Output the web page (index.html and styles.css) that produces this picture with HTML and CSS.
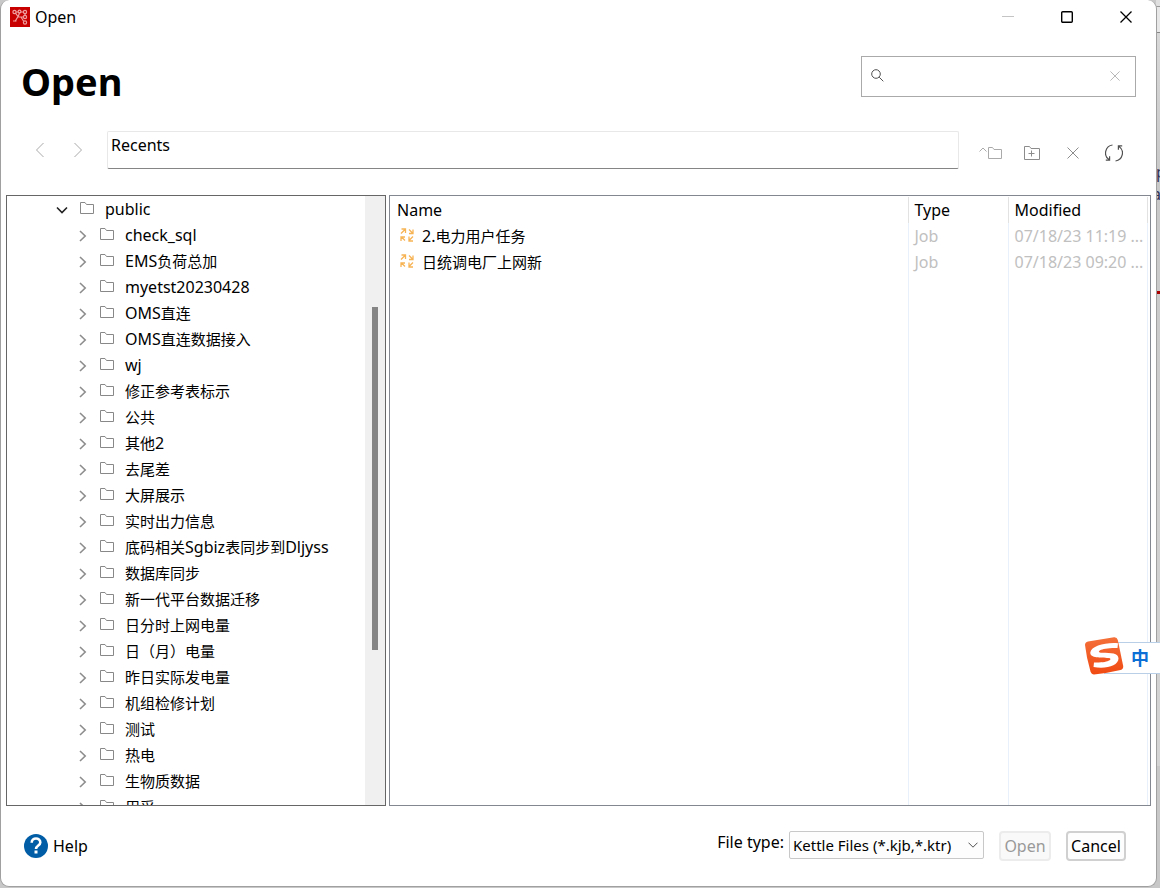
FILE: index.html
```html
<!DOCTYPE html>
<html lang="zh-CN">
<head>
<meta charset="utf-8">
<title>Open</title>
<link rel="stylesheet" href="styles.css">
</head>
<body>
<svg class="sprite" aria-hidden="true">
  <symbol id="folder" viewBox="0 0 14 12"><path d="M.5 11.500V.5H5L6.500 2.500H13.500V11.500Z"/></symbol>
  <symbol id="chev" viewBox="0 0 8 12"><path d="M1 1 6.200 6 1 11"/></symbol>
  <symbol id="cross" viewBox="0 0 12 12"><path d="M.5 .5 11.500 11.500M11.500 .5 .5 11.500"/></symbol>
  <symbol id="job" viewBox="0 0 14 14"><path d="M1 5.500 5 1.500M1.500 1H5.500V5M9 1.500 12.500 5M13 1.500V5.500H9M5 12.500 1.500 9M1 13V9H5M13 8.500 9 12.500M9 8.500V13H13"/></symbol>
</svg>
<div class="backdrop" aria-hidden="true"><span class="behind one">p</span><span class="behind two">a</span><span class="behind-line"></span></div>
<main class="window">
  <header class="titlebar">
    <svg class="app-icon" viewBox="0 0 20 20"><rect width="20" height="20" fill="#c80000"/><g fill="none" stroke="#f0a0a0" stroke-width="1.200"><circle cx="4.500" cy="5" r="1.600"/><circle cx="9.500" cy="4.500" r="1.400"/><circle cx="15" cy="5" r="1.600"/><circle cx="15" cy="10" r="1.600"/><circle cx="15" cy="15.500" r="1.600"/><path d="M6 5H8M11 5H13.500M15 6.500V8.500M5.500 6.200 8 9.500 5 14.500M3 14H6.500M9.500 6 8 10H13.500M11 10 13.500 14"/></g></svg>
    <span class="caption">Open</span>
    <button class="win-btn" aria-label="Minimize" disabled><svg class="faint" width="12" height="12" viewBox="0 0 12 12"><path d="M0 5.500H12"/></svg></button>
    <button class="win-btn" aria-label="Maximize"><svg width="12" height="12" viewBox="0 0 12 12"><rect x=".7" y=".7" width="10.600" height="10.600" rx="1" stroke-width="1.400"/></svg></button>
    <button class="win-btn" aria-label="Close"><svg width="12" height="12" stroke-width="1.300"><use href="#cross"/></svg></button>
  </header>
  <section class="heading">
    <h1>Open</h1>
    <div class="search">
      <svg class="dark" width="13" height="13" viewBox="0 0 13 13"><circle cx="5" cy="5" r="4.300"/><path d="M8.200 8.200 12.300 12.300"/></svg>
      <input type="text" aria-label="Search">
      <button aria-label="Clear search"><svg class="light" width="10" height="10"><use href="#cross"/></svg></button>
    </div>
  </section>
  <section class="toolbar">
    <button class="nav" aria-label="Back"><svg class="light" width="10" height="16" viewBox="0 0 10 16"><path d="M8.500 1 1.500 8 8.500 15"/></svg></button>
    <button class="nav" aria-label="Forward"><svg class="light" width="10" height="16" viewBox="0 0 10 16"><path d="M1.500 1 8.500 8 1.500 15"/></svg></button>
    <input class="path" type="text" aria-label="Location" value="Recents">
    <div class="tools">
      <button aria-label="Up one folder"><svg class="light" width="23" height="12" viewBox="0 0 23 12"><path d="M.5 4.500 4 1 7.500 4.500M9.500 11.500V.5H13.500L15 2.500H22.500V11.500Z"/></svg></button>
      <button aria-label="New folder"><svg class="mid" width="16" height="14" viewBox="0 0 16 14"><path d="M.5 13.500V.5H5.500L7 2.500H15.500V13.500ZM7.500 4.500V10.500M4.500 7.500H10.500"/></svg></button>
      <button aria-label="Delete"><svg class="mid" width="12" height="12"><use href="#cross"/></svg></button>
      <button aria-label="Refresh"><svg class="dark" width="18" height="18" viewBox="0 0 18 18" stroke-width="1.200"><path d="M7.500 1A8 8 0 0 0 4 15.500M.8 16.200H4.600V12.300M10.500 17A8 8 0 0 0 14 2.500M17.200 1.800H13.400V5.700"/></svg></button>
    </div>
  </section>
  <section class="panels">
    <div class="tree">
      <ul class="nodes">
        <li class="root"><svg class="open" width="12" height="8" viewBox="0 0 12 8"><path d="M1 1.500 6 6.500 11 1.500"/></svg><svg class="folder"><use href="#folder"/></svg>public</li>
        <li><svg class="chev"><use href="#chev"/></svg><svg class="folder"><use href="#folder"/></svg>check_sql</li>
        <li><svg class="chev"><use href="#chev"/></svg><svg class="folder"><use href="#folder"/></svg>EMS<span class="han">负荷总加</span></li>
        <li><svg class="chev"><use href="#chev"/></svg><svg class="folder"><use href="#folder"/></svg>myetst20230428</li>
        <li><svg class="chev"><use href="#chev"/></svg><svg class="folder"><use href="#folder"/></svg>OMS<span class="han">直连</span></li>
        <li><svg class="chev"><use href="#chev"/></svg><svg class="folder"><use href="#folder"/></svg>OMS<span class="han">直连数据接入</span></li>
        <li><svg class="chev"><use href="#chev"/></svg><svg class="folder"><use href="#folder"/></svg>wj</li>
        <li><svg class="chev"><use href="#chev"/></svg><svg class="folder"><use href="#folder"/></svg><span class="han">修正参考表标示</span></li>
        <li><svg class="chev"><use href="#chev"/></svg><svg class="folder"><use href="#folder"/></svg><span class="han">公共</span></li>
        <li><svg class="chev"><use href="#chev"/></svg><svg class="folder"><use href="#folder"/></svg><span class="han">其他</span>2</li>
        <li><svg class="chev"><use href="#chev"/></svg><svg class="folder"><use href="#folder"/></svg><span class="han">去尾差</span></li>
        <li><svg class="chev"><use href="#chev"/></svg><svg class="folder"><use href="#folder"/></svg><span class="han">大屏展示</span></li>
        <li><svg class="chev"><use href="#chev"/></svg><svg class="folder"><use href="#folder"/></svg><span class="han">实时出力信息</span></li>
        <li><svg class="chev"><use href="#chev"/></svg><svg class="folder"><use href="#folder"/></svg><span class="han">底码相关</span>Sgbiz<span class="han">表同步到</span>Dljyss</li>
        <li><svg class="chev"><use href="#chev"/></svg><svg class="folder"><use href="#folder"/></svg><span class="han">数据库同步</span></li>
        <li><svg class="chev"><use href="#chev"/></svg><svg class="folder"><use href="#folder"/></svg><span class="han">新一代平台数据迁移</span></li>
        <li><svg class="chev"><use href="#chev"/></svg><svg class="folder"><use href="#folder"/></svg><span class="han">日分时上网电量</span></li>
        <li><svg class="chev"><use href="#chev"/></svg><svg class="folder"><use href="#folder"/></svg><span class="han">日（月）电量</span></li>
        <li><svg class="chev"><use href="#chev"/></svg><svg class="folder"><use href="#folder"/></svg><span class="han">昨日实际发电量</span></li>
        <li><svg class="chev"><use href="#chev"/></svg><svg class="folder"><use href="#folder"/></svg><span class="han">机组检修计划</span></li>
        <li><svg class="chev"><use href="#chev"/></svg><svg class="folder"><use href="#folder"/></svg><span class="han">测试</span></li>
        <li><svg class="chev"><use href="#chev"/></svg><svg class="folder"><use href="#folder"/></svg><span class="han">热电</span></li>
        <li><svg class="chev"><use href="#chev"/></svg><svg class="folder"><use href="#folder"/></svg><span class="han">生物质数据</span></li>
        <li><svg class="chev"><use href="#chev"/></svg><svg class="folder"><use href="#folder"/></svg><span class="han">用采</span></li>
      </ul>
      <div class="scrollbar"><div class="thumb"></div></div>
    </div>
    <div class="list">
      <table>
        <thead><tr><th>Name</th><th class="type">Type</th><th class="modified">Modified</th><th class="end"></th></tr></thead>
        <tbody>
          <tr><td><div class="file"><svg class="job"><use href="#job"/></svg><span>2.<span class="han">电力用户任务</span></span></div></td><td class="muted">Job</td><td class="muted">07/18/23 11:19 ...</td><td></td></tr>
          <tr><td><div class="file"><svg class="job"><use href="#job"/></svg><span class="han">日统调电厂上网新</span></div></td><td class="muted">Job</td><td class="muted">07/18/23 09:20 ...</td><td></td></tr>
          <tr class="rest"><td></td><td></td><td></td><td></td></tr>
        </tbody>
      </table>
    </div>
  </section>
  <footer class="footer">
    <button class="help"><svg width="24" height="24" viewBox="0 0 24 24"><circle cx="12" cy="12" r="12" fill="#005da6"/><path d="M7.700 8.700C7.700 3.200 16.300 3.200 16.300 8.500 16.300 11.500 12 11.500 12 15" fill="none" stroke="#fff" stroke-width="2.600"/><rect x="10.500" y="16.500" width="3" height="3" fill="#fff"/></svg>Help</button>
    <label for="filetype">File type:</label>
    <div class="select">
      <select id="filetype"><option>Kettle Files (*.kjb,*.ktr)</option></select>
      <svg class="dark" width="10" height="6" viewBox="0 0 10 6"><path d="M.5 .7 5 5.200 9.500 .7"/></svg>
    </div>
    <button class="action" disabled>Open</button>
    <button class="action cancel">Cancel</button>
  </footer>
</main>
<aside class="ime">
  <svg width="40" height="40" viewBox="0 0 40 40"><defs><linearGradient id="ember" x2="0" y2="1"><stop offset="0" stop-color="#f4703a"/><stop offset="1" stop-color="#f04a12"/></linearGradient></defs><path d="M4 5.500 30 1.300Q33 1 33.800 4L39.200 30Q39.500 33 36.500 34 24 37 10 38.500 7.500 38.500 6.500 35.500 2.500 22 1 9 1 6.200 4 5.500Z" fill="url(#ember)"/><path d="M34 7.200C22 6 7 10 6.300 16.500 6 22.500 17 21.500 24.500 22 29 22.500 26 27 10 26.500L9.500 31C22 33.500 34.500 29.500 34.500 22.500 34.500 17 27 17 18 16.800 11 16.500 16 11.500 33.500 12Z" fill="#fff"/></svg>
  <span class="mode">中</span>
</aside>
</body>
</html>
```

FILE: styles.css
```css
* { box-sizing: border-box; }
body {
  margin: 0;
  height: 100vh;
  overflow: hidden;
  padding: 0 3px 1px 0;
  background: #c8c8c8;
  color: #000;
  font: 16px/26px "Noto Sans", "Noto Sans CJK SC", sans-serif;
}
button, input, select { font: inherit; color: inherit; margin: 0; }
button { padding: 0; border: 0; background: none; }
svg { display: block; fill: none; stroke: currentColor; flex: none; }
.sprite { position: absolute; width: 0; height: 0; }
.app-icon, .help svg, .ime svg { stroke: none; }
.faint { stroke: #c4c4c4; }
.light { stroke: #aaa; }
.mid { stroke: #8c8c8c; }
.dark { stroke: #505050; }

.backdrop {
  position: absolute;
  inset: 0 0 auto auto;
  width: 4px;
  height: 766px;
  overflow: hidden;
  background: linear-gradient(#e0e0e0 0 6px, #999 6px 7px, #e8e8e8 7px 32px, #888 32px 33px, #d8d8d8 33px, #c8c8c8 180px, #d4d4d4);
}
.behind { position: absolute; left: 0; color: #335; line-height: 20px; }
.one { top: 162px; }
.two { top: 184px; left: -4px; }
.behind-line { position: absolute; top: 291px; right: 0; width: 4px; height: 3px; background: #a00; }

.window {
  position: relative;
  display: flex;
  flex-direction: column;
  height: 100%;
  background: #fff;
  border: 1px solid #a0a0a0;
  border-top: 0;
  border-radius: 9px;
}
.titlebar { display: flex; align-items: center; height: 34px; padding: 0 1px 0 9px; }
.app-icon { width: 20px; height: 20px; }
.caption { flex: 1; padding-left: 5px; }
.win-btn { display: grid; place-items: center; width: 59px; height: 34px; }

.heading { display: flex; justify-content: space-between; align-items: center; height: 86px; padding: 0 20px; }
h1 { margin: 0; padding-top: 8px; font-size: 38px; line-height: 52px; }
.search {
  display: flex;
  align-items: center;
  width: 275px;
  height: 41px;
  margin-bottom: 1px;
  padding: 0 15px 2px 9px;
  border: 1px solid #aaa;
}
.search input { flex: 1; min-width: 0; border: 0; outline: 0; background: none; }

.toolbar { display: flex; align-items: center; height: 75px; padding: 0 22px 15px 20px; }
.nav { display: grid; place-items: center; width: 38px; height: 38px; }
.path {
  flex: 1;
  min-width: 0;
  height: 38px;
  margin-left: 10px;
  padding: 0 3px 11px;
  border: 1px solid #e8e8e8;
  border-bottom-color: #858585;
  border-radius: 2px;
}
.tools { display: flex; padding: 6px 0 0 11px; }
.tools button { display: grid; place-items: center; width: 41px; height: 26px; }

.panels { flex: 1; min-height: 0; display: flex; gap: 3px; padding: 0 5px; }
.tree { display: flex; width: 380px; border: 1px solid #666; overflow: hidden; }
.nodes { flex: 1; margin: 0; padding: 0; list-style: none; }
.nodes li { display: flex; align-items: center; height: 26px; padding-left: 72px; white-space: nowrap; }
.nodes .root { padding-left: 49px; }
.han { font-size: 15px; font-family: "Noto Sans CJK SC", sans-serif; }
.chev { width: 8px; height: 12px; margin: 2px 13px 0 0; stroke: #8c8c8c; stroke-width: 1.600; }
.open { margin: 2px 12px 0 0; stroke: #222; stroke-width: 1.600; }
.folder { width: 14px; height: 12px; margin: 0 11px 2px 0; stroke: #888; }
.scrollbar { width: 20px; padding-left: 7px; background: #f0f0f0; }
.thumb { width: 6px; height: 343px; margin-top: 111px; background: #858585; }

.list { flex: 1; min-width: 0; padding: 1px 0 0; border: 1px solid #828790; }
table { width: 100%; height: 100%; table-layout: fixed; border-collapse: collapse; }
th, td { height: 26px; padding: 0 0 0 6px; text-align: left; font-weight: 400; white-space: nowrap; overflow: hidden; }
th:first-child, td:first-child { padding-left: 7px; }
th + th { border-left: 1px solid #e2e2e2; }
td + td { border-left: 1px solid #e8f0fb; }
.type { width: 100px; }
.modified { width: 139px; }
.end { width: 3px; padding: 0; }
.rest td { height: auto; }
.muted { color: #c0c0c0; }
.file { display: flex; align-items: center; padding-left: 3px; }
.job { width: 14px; height: 14px; margin: 0 8px 3px 0; stroke: #f7b455; stroke-width: 1.300; }

.footer { display: flex; align-items: center; height: 80px; padding: 0 30px 0 23px; }
.help { display: flex; align-items: center; gap: 5px; margin-right: auto; }
.footer label { padding: 0 5px 8px 0; }
.select { display: grid; align-items: center; width: 195px; padding-bottom: 2px; }
.select > * { grid-area: 1 / 1; }
.select svg { justify-self: end; margin-right: 6px; pointer-events: none; }
select {
  appearance: none;
  height: 28px;
  padding: 0 3px;
  border: 1px solid #c8c8c8;
  border-radius: 2px;
  background: #fdfdfd;
  font-size: 15px;
}
.action {
  width: 52px;
  height: 30px;
  margin-left: 15px;
  border: 2px solid #ececec;
  border-radius: 4px;
  background: #f9f9f9;
}
.action:disabled { color: #999; }
.cancel { width: 60px; border-color: #d0d0d0; background: #fdfdfd; }

.ime { position: absolute; right: 0; top: 636px; width: 76px; height: 40px; display: flex; align-items: center; }
.ime::before { content: ""; position: absolute; inset: 6px 0 2px 20px; background: #fff; border: 1px solid #b9cfe8; border-right: 0; }
.ime svg, .mode { position: relative; }
.mode { padding: 2px 0 0 7px; color: #0b6fd6; font: bold 18px/26px "Noto Sans CJK SC", sans-serif; }
```
